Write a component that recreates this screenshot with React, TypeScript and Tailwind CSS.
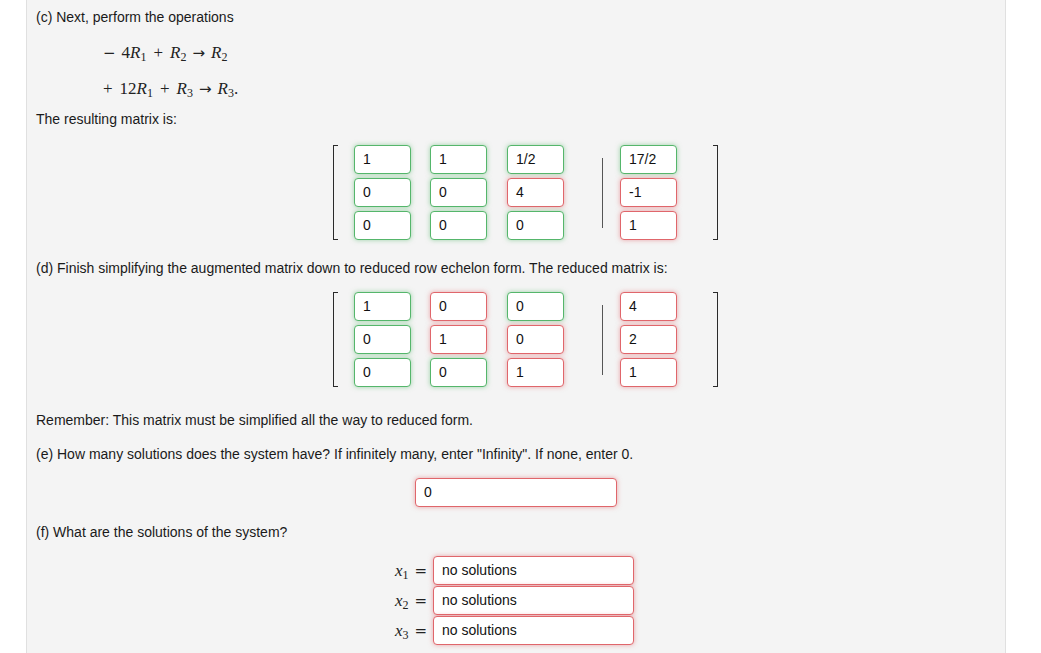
const green = "border-[#55b66b] shadow-[0_0_5px_rgba(85,182,107,0.55)]";
const red = "border-[#e0666b] shadow-[0_0_5px_rgba(224,102,107,0.55)]";

type Cell = { v: string; ok: boolean };

const Box = ({ cell, w = "w-[57px]" }: { cell: Cell; w?: string }) => (
  <div
    className={`${w} h-[29px] bg-white border rounded-[4px] flex items-center pl-[8px] text-[14px] text-[#111] ${cell.ok ? green : red}`}
  >
    {cell.v}
  </div>
);

const Bracket = ({ side }: { side: "l" | "r" }) => (
  <div
    className={`w-[5px] h-[95px] border-y-[1.5px] border-[#2a2a2a] ${side === "l" ? "border-l-[1.5px]" : "border-r-[1.5px]"}`}
  />
);

const Col = ({ cells, className = "" }: { cells: Cell[]; className?: string }) => (
  <div className={`flex flex-col gap-[4px] ${className}`}>
    {cells.map((c, i) => (
      <Box key={i} cell={c} />
    ))}
  </div>
);

const Matrix = ({ cols, aug }: { cols: Cell[][]; aug: Cell[] }) => (
  <div className="flex items-center ml-[297px]">
    <Bracket side="l" />
    <Col cells={cols[0]} className="ml-[16px]" />
    <Col cells={cols[1]} className="ml-[19px]" />
    <Col cells={cols[2]} className="ml-[20px]" />
    <div className="ml-[38px] w-px h-[70px] bg-[#555]" />
    <Col cells={aug} className="ml-[17px]" />
    <div className="ml-[36px]">
      <Bracket side="r" />
    </div>
  </div>
);

const c = (v: string, ok: boolean): Cell => ({ v, ok });

const R = ({ n }: { n: string }) => (
  <span className="inline-flex items-baseline">
    <span className="italic">R</span>
    <span className="text-[12px] relative top-[3px]">{n}</span>
  </span>
);

const Arrow = () => (
  <span className="mx-[6px] font-['DejaVu_Sans',sans-serif] text-[15px]">→</span>
);

const XLabel = ({ n }: { n: string }) => (
  <div className="w-[47px] flex items-baseline justify-end text-[17px] font-['Liberation_Serif',serif] text-[#222]">
    <span className="italic">x</span>
    <span className="text-[12px] relative top-[3px]">{n}</span>
    <span className="ml-[6px] font-['DejaVu_Serif',serif] text-[15px]">=</span>
  </div>
);

const mathRow = "mt-[12px] h-[24px] flex items-baseline pt-[2px] ml-[67px] text-[17px] font-['Liberation_Serif',serif] text-[#222]";

export default function App() {
  const m1 = [
    [c("1", true), c("0", true), c("0", true)],
    [c("1", true), c("0", true), c("0", true)],
    [c("1/2", true), c("4", false), c("0", true)],
  ];
  const a1 = [c("17/2", true), c("-1", false), c("1", false)];
  const m2 = [
    [c("1", true), c("0", true), c("0", true)],
    [c("0", false), c("1", false), c("0", true)],
    [c("0", true), c("0", false), c("1", false)],
  ];
  const a2 = [c("4", false), c("2", false), c("1", false)];

  return (
    <div className="w-[1041px] h-[653px] bg-white overflow-hidden font-['Liberation_Sans',Arial,sans-serif] text-[14px] text-[#1a1a1a]">
      <div className="ml-[26px] w-[980px] h-[653px] bg-[#f4f4f4] border-x border-[#e0e0e0] pl-[9px]">
        <div className="pt-[8px] h-[26px] leading-[18px]">(c) Next, perform the operations</div>

        <div className={mathRow}>
          <span className="font-['DejaVu_Sans',sans-serif] text-[15px]">−</span>
          <span className="ml-[6px]">4</span>
          <R n="1" />
          <span className="mx-[7px]">+</span>
          <R n="2" />
          <Arrow />
          <R n="2" />
        </div>
        <div className={mathRow}>
          <span>+</span>
          <span className="ml-[7px]">12</span>
          <R n="1" />
          <span className="mx-[7px]">+</span>
          <R n="3" />
          <Arrow />
          <R n="3" />
          <span>.</span>
        </div>

        <div className="mt-[12px] h-[18px] leading-[18px]">The resulting matrix is:</div>

        <div className="mt-[17px]">
          <Matrix cols={m1} aug={a1} />
        </div>

        <div className="mt-[19px] h-[18px] leading-[18px]">
          (d) Finish simplifying the augmented matrix down to reduced row echelon form. The reduced matrix is:
        </div>

        <div className="mt-[15px]">
          <Matrix cols={m2} aug={a2} />
        </div>

        <div className="mt-[24px] h-[18px] leading-[18px]">
          Remember: This matrix must be simplified all the way to reduced form.
        </div>
        <div className="mt-[16px] h-[18px] leading-[18px]">
          (e) How many solutions does the system have? If infinitely many, enter "Infinity". If none, enter 0.
        </div>

        <div className="mt-[15px] ml-[379px]">
          <Box cell={c("0", false)} w="w-[202px]" />
        </div>

        <div className="mt-[16px] h-[18px] leading-[18px]">(f) What are the solutions of the system?</div>

        <div className="mt-[15px] ml-[344px] flex flex-col gap-[1px]">
          {["1", "2", "3"].map((n) => (
            <div key={n} className="flex items-center">
              <XLabel n={n} />
              <div className="ml-[6px]">
                <Box cell={c("no solutions", false)} w="w-[201px]" />
              </div>
            </div>
          ))}
        </div>
      </div>
    </div>
  );
}
